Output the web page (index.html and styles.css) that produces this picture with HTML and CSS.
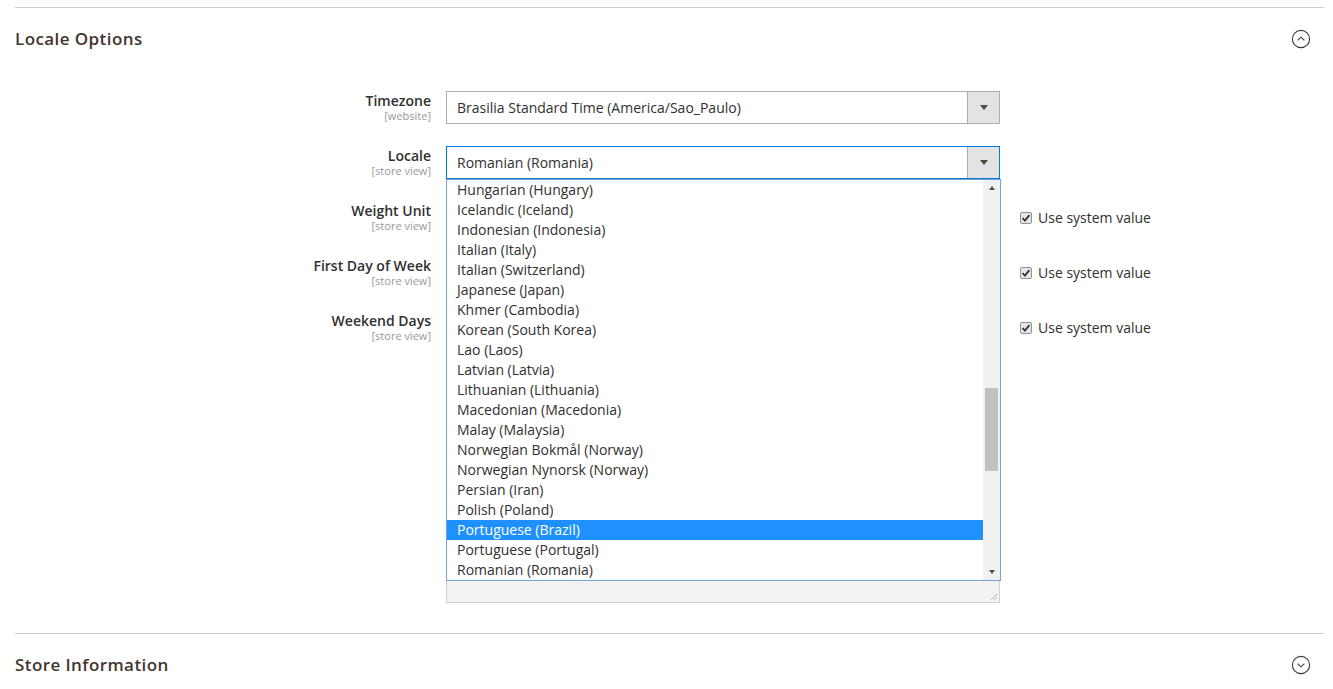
FILE: index.html
```html
<!DOCTYPE html>
<html>
<head>
<meta charset="utf-8">
<link rel="stylesheet" href="styles.css">
</head>
<body>
<div class="page">
  <section class="section">
    <div class="section-head">
      <h2 class="section-title">Locale Options</h2>
      <svg class="toggle" width="20" height="20" viewBox="0 0 20 20"><circle cx="10" cy="10" r="8.6" fill="none" stroke="#41362f" stroke-width="1.1"/><path d="M6.6 11.4 L10 8.2 L13.4 11.4" fill="none" stroke="#41362f" stroke-width="1.1"/></svg>
    </div>
    <div class="form">
      <div class="label"><span class="label-text">Timezone</span><span class="scope">[website]</span></div>
      <div class="control">
        <div class="select"><span class="select-value">Brasilia Standard Time (America/Sao_Paulo)</span><span class="select-btn"><i class="caret"></i></span></div>
      </div>
      <div class="use-default"></div>

      <div class="label"><span class="label-text">Locale</span><span class="scope">[store view]</span></div>
      <div class="control">
        <div class="select focused"><span class="select-value">Romanian (Romania)</span><span class="select-btn"><i class="caret"></i></span></div>
        <div class="dropdown">
          <ul class="options">
            <li>Hungarian (Hungary)</li>
            <li>Icelandic (Iceland)</li>
            <li>Indonesian (Indonesia)</li>
            <li>Italian (Italy)</li>
            <li>Italian (Switzerland)</li>
            <li>Japanese (Japan)</li>
            <li>Khmer (Cambodia)</li>
            <li>Korean (South Korea)</li>
            <li>Lao (Laos)</li>
            <li>Latvian (Latvia)</li>
            <li>Lithuanian (Lithuania)</li>
            <li>Macedonian (Macedonia)</li>
            <li>Malay (Malaysia)</li>
            <li>Norwegian Bokmål (Norway)</li>
            <li>Norwegian Nynorsk (Norway)</li>
            <li>Persian (Iran)</li>
            <li>Polish (Poland)</li>
            <li class="selected">Portuguese (Brazil)</li>
            <li>Portuguese (Portugal)</li>
            <li>Romanian (Romania)</li>
          </ul>
          <div class="scrollbar">
            <i class="sb-up"></i>
            <div class="sb-track"><div class="sb-thumb"></div></div>
            <i class="sb-down"></i>
          </div>
        </div>
      </div>
      <div class="use-default"></div>

      <div class="label"><span class="label-text">Weight Unit</span><span class="scope">[store view]</span></div>
      <div class="control"><div class="select disabled"></div></div>
      <label class="use-default"><svg class="check" width="12" height="12" viewBox="0 0 12 12"><rect x="0.5" y="0.5" width="11" height="11" rx="1.5" fill="#e6e6e6" stroke="#8f8f8f"/><path d="M2.6 6.2 L4.9 8.6 L9.4 3.2" fill="none" stroke="#333" stroke-width="1.8"/></svg><span>Use system value</span></label>

      <div class="label"><span class="label-text">First Day of Week</span><span class="scope">[store view]</span></div>
      <div class="control"><div class="select disabled"></div></div>
      <label class="use-default"><svg class="check" width="12" height="12" viewBox="0 0 12 12"><rect x="0.5" y="0.5" width="11" height="11" rx="1.5" fill="#e6e6e6" stroke="#8f8f8f"/><path d="M2.6 6.2 L4.9 8.6 L9.4 3.2" fill="none" stroke="#333" stroke-width="1.8"/></svg><span>Use system value</span></label>

      <div class="label"><span class="label-text">Weekend Days</span><span class="scope">[store view]</span></div>
      <div class="control"><div class="multiselect"><svg class="grip" width="10" height="10" viewBox="0 0 10 10"><path d="M9 3 L3 9 M9 6 L6 9" stroke="#b5b5b5" stroke-width="1"/></svg></div></div>
      <label class="use-default"><svg class="check" width="12" height="12" viewBox="0 0 12 12"><rect x="0.5" y="0.5" width="11" height="11" rx="1.5" fill="#e6e6e6" stroke="#8f8f8f"/><path d="M2.6 6.2 L4.9 8.6 L9.4 3.2" fill="none" stroke="#333" stroke-width="1.8"/></svg><span>Use system value</span></label>
    </div>
  </section>
  <section class="section">
    <div class="section-head">
      <h2 class="section-title">Store Information</h2>
      <svg class="toggle" width="20" height="20" viewBox="0 0 20 20"><circle cx="10" cy="10" r="8.6" fill="none" stroke="#41362f" stroke-width="1.1"/><path d="M6.6 8.6 L10 11.8 L13.4 8.6" fill="none" stroke="#41362f" stroke-width="1.1"/></svg>
    </div>
  </section>
</div>
</body>
</html>
```

FILE: styles.css
```css
* { box-sizing: border-box; }
html, body { margin: 0; padding: 0; background: #fff; }
body {
  font-family: "Open Sans", "Liberation Sans", sans-serif;
  color: #303030;
  font-size: 14px;
  overflow: hidden;
}
.page { padding: 7px 9px 0 15px; }
.section { border-top: 1px solid #cccccc; }
.section-head {
  display: flex;
  align-items: center;
  justify-content: space-between;
  height: 62px;
  padding-right: 13px;
}
.section-title {
  margin: 0 0 2px 0;
  font-size: 17px;
  font-weight: 600;
  color: #41362f;
  letter-spacing: 0.42px;
}
.toggle { display: block; }
.form {
  display: grid;
  grid-template-columns: 416px 554px auto;
  column-gap: 15px;
  row-gap: 22px;
  padding-top: 21px;
  padding-bottom: 30px;
}
.label {
  display: flex;
  flex-direction: column;
  align-items: flex-end;
  padding-top: 1px;
}
.label-text {
  font-size: 14px;
  font-weight: 600;
  line-height: 18px;
  color: #303030;
}
.scope {
  font-size: 11px;
  line-height: 12px;
  color: #999;
}
.control { position: relative; }
.select {
  display: flex;
  height: 33px;
  border: 1px solid #adadad;
  background: #fff;
}
.select.focused { border-color: #007bdb; }
.select.disabled { background: #e9e9e9; }
.select-value {
  flex: 1;
  padding-left: 10px;
  line-height: 31px;
  font-size: 14px;
  color: #303030;
}
.select-btn {
  width: 32px;
  border-left: 1px solid #adadad;
  background: #e3e3e3;
  display: flex;
  align-items: center;
  justify-content: center;
}
.caret {
  width: 0; height: 0;
  border-left: 4.5px solid transparent;
  border-right: 4.5px solid transparent;
  border-top: 5px solid #514943;
}
.dropdown {
  position: absolute;
  left: 0;
  top: 33px;
  width: 555px;
  height: 402px;
  border: 1px solid #7aa1dc;
  background: #fff;
  display: flex;
  z-index: 5;
}
.options {
  list-style: none;
  margin: 0;
  padding: 0;
  flex: 1;
}
.options li {
  height: 20px;
  line-height: 20px;
  padding-left: 10px;
  font-size: 14px;
  color: #303030;
  white-space: nowrap;
}
.options li.selected { background: #1e90ff; color: #fff; }
.scrollbar {
  width: 17px;
  background: #f1f1f1;
  display: flex;
  flex-direction: column;
  align-items: center;
}
.sb-up, .sb-down {
  display: block;
  width: 0; height: 0;
  border-left: 3.5px solid transparent;
  border-right: 3.5px solid transparent;
  margin: 6px 0;
}
.sb-up { border-bottom: 4px solid #505050; }
.sb-down { border-top: 4px solid #505050; }
.sb-track { flex: 1; width: 100%; padding-top: 192px; display: flex; justify-content: center; }
.sb-thumb { width: 13px; height: 83px; background: #c1c1c1; }
.multiselect {
  position: relative;
  height: 292px;
  border: 1px solid #cfcfcf;
  background: #f3f3f3;
}
.grip { position: absolute; right: 1px; bottom: 1px; }
.use-default {
  display: flex;
  align-items: center;
  height: 33px;
  margin-left: 5px;
  font-size: 14px;
  color: #303030;
}
.check { margin-right: 6px; flex: none; }
```
